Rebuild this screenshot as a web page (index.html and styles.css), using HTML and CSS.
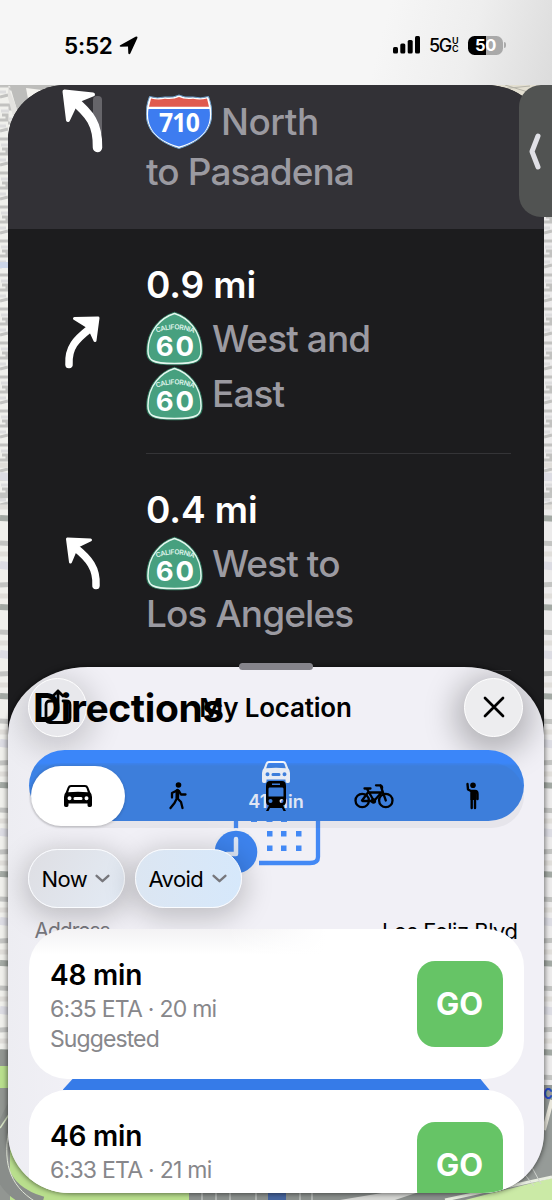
FILE: index.html
```html
<!DOCTYPE html>
<html lang="en">
<head>
<meta charset="utf-8">
<title>Directions</title>
<link rel="stylesheet" href="styles.css">
</head>
<body>
<svg class="defs" width="0" height="0" aria-hidden="true">
  <defs>
    <symbol id="ca60" viewBox="0 0 58 55">
      <path d="M29 .8C43 5 57.300 19 57.300 40C57.300 50 54 54.300 29 54.300S.7 50 .7 40C.7 19 15 5 29 .8Z" fill="#3f9f7c" stroke="#2c6b55" stroke-width="1"/>
      <path d="M29 2C42 6 56 19 56 40C56 49 53 53 29 53S2 49 2 40C2 19 16 6 29 2Z" fill="#47a07f" stroke="#e4f6ee" stroke-width="1.500"/>
      <path id="caArc" d="M11 21.800Q29 14.500 48 21.800" fill="none"/>
      <text class="shield-state"><textPath href="#caArc" textLength="38">CALIFORNIA</textPath></text>
      <text class="shield-number" x="29" y="45" text-anchor="middle" textLength="38">60</text>
    </symbol>
    <symbol id="car" viewBox="0 0 28 22">
      <path fill-rule="evenodd" d="M7 0H21Q23.500 0 24.400 2.400L26.200 7.300Q28 9 28 12V20.200Q28 22 26.200 22H25Q23.500 22 23.500 20.300V18.500H4.500V20.300Q4.500 22 3 22H1.800Q0 22 0 20.200V12Q0 9 1.800 7.300L3.600 2.400Q4.500 0 7 0ZM7.400 2Q6 2 5.500 3.300L4.200 7.200Q14 6.300 23.800 7.200L22.500 3.300Q22 2 20.600 2ZM5.500 11.300A2 2 0 1 0 5.500 15.300A2 2 0 0 0 5.500 11.300ZM22.500 11.300A2 2 0 1 0 22.500 15.300A2 2 0 0 0 22.500 11.300ZM10.800 12Q9.500 12 9.500 13.500T10.800 15H17.200Q18.500 15 18.500 13.500T17.200 12Z"/>
    </symbol>
    <linearGradient id="land" x1="0" y1="0" x2="1" y2="0"><stop offset="0" stop-color="#f0f0ec"/><stop offset="1" stop-color="#ecebeb"/></linearGradient>
    <pattern id="blocks" width="17" height="34" patternUnits="userSpaceOnUse">
      <path d="M0 3H10V7H17M2 13H7V18H0M8 21H17M0 29L8 27" stroke="#c2c2c0" stroke-width="3" fill="none"/>
      <path d="M1 9H9M9 17H17M0 24H6" stroke="#dcdcdd" stroke-width="3" fill="none"/>
    </pattern>
    <pattern id="streets" width="20" height="89" patternUnits="userSpaceOnUse">
      <path d="M0 9L20 10M0 51L20 50" stroke="#c3c4c2" stroke-width="5"/>
      <path d="M0 31L20 33" stroke="#dcdce3" stroke-width="8"/>
      <path d="M0 73L20 74" stroke="#a3a9a4" stroke-width="6"/>
      <path d="M0 20H20M0 62H20" stroke="#e0deda" stroke-width="5"/>
    </pattern>
  </defs>
</svg>

<main class="screen">
  <svg class="map" viewBox="0 0 552 1200" aria-hidden="true">
    <rect width="552" height="1200" fill="url(#land)"/>
    <rect y="85" width="552" height="420" fill="url(#blocks)"/>
    <rect y="460" width="552" height="640" fill="url(#streets)"/>
    <path d="M0 85H60V100H30L20 120L10 86Z" fill="#bdbdbb"/>
    <path d="M26 88L42 90L28 99Z" fill="#f4f3ef"/>
    <path d="M8 86L19 114L14 120L8 98Z" fill="#e3e2df"/>
    <path d="M490 85H552V105H510Z" fill="#e3dfd1"/>
    <path d="M500 89L530 86M505 85L528 92" stroke="#b5b3a8"/>
    <path d="M0 265H10" stroke="#cdd6e8" stroke-width="6"/>
    <path d="M0 1066L120 1060V1200H0Z" fill="#b9df8d"/>
    <path d="M0 1050H10V1066H0ZM0 1088H10V1200H0Z" fill="#929692"/>
    <path d="M14 1108C-12 1155 -4 1190 42 1204" fill="none" stroke="#898d8a" stroke-width="15"/>
    <path d="M10 1125C2 1160 8 1185 36 1202" fill="none" stroke="#dfe4d6" stroke-width="1"/>
    <path d="M0 1128L10 1113" stroke="#d6e3c4" stroke-width="1.500"/>
    <path d="M110 1185H192V1200H110Z" fill="#b9df8d"/>
    <path d="M189 1185H552V1200H189Z" fill="#8c918e"/>
    <path d="M202 1185V1200M216 1185V1200M230 1185V1200M256 1185V1200M300 1185V1200M312 1185V1200" stroke="#d5d8d5"/>
    <path d="M268 1190H286V1200H268Z" fill="#46659e"/>
    <path d="M544 1085H552V1180L500 1200H480Z" fill="#969b98"/>
    <path d="M340 1200L400 1190H425L395 1200Z" fill="#d6d7d4"/>
    <path d="M465 1200L552 1178V1200Z" fill="#cbeaa6"/>
    <path d="M445 1200L552 1177" stroke="#e9eee1" stroke-width="3"/>
    <path d="M528 1160L541 1184M518 1166L534 1186" stroke="#d3d6d1"/>
    <path d="M552 1100L544 1130" stroke="#e9e7dc" stroke-width="4"/>
    <text class="map-label" x="543.500" y="1099" textLength="9" lengthAdjust="spacingAndGlyphs">C</text>
  </svg>

  <header class="status">
    <span class="time">5:52</span>
    <svg class="location" viewBox="0 0 19 19"><path d="M1.200 9.200L16.500 .700Q19 -.200 18.300 2.300L11.300 17.600Q10 19 9.300 17.200L9 10.600L1.900 10.700Q-.200 10.200 1.200 9.200Z"/></svg>
    <svg class="signal" viewBox="0 0 27 18"><rect y="11" width="5" height="6.500" rx="1.500"/><rect x="7.300" y="7.500" width="5" height="10" rx="1.500"/><rect x="14.700" y="4" width="5" height="13.500" rx="1.500"/><rect x="22" y="0" width="5" height="17.500" rx="1.500"/></svg>
    <span class="network">5G</span><span class="uc"><span>U</span><span>C</span></span>
    <span class="battery">50</span><span class="nub"></span>
  </header>

  <section class="steps">
    <article class="step current">
      <svg class="maneuver" viewBox="8 85 138 144"><rect x="93" y="96" width="9" height="40" rx="4" fill="#66656a"/><path d="M97.500 147.500C98 124 90 114 72 99" fill="none" stroke="#fff" stroke-width="9.500" stroke-linecap="round"/><path d="M64.500 91.500L93 94.500L77 101L68 120Z" fill="#fff" stroke="#fff" stroke-width="4" stroke-linejoin="round"/></svg>
      <div class="copy">
        <p class="line road"><svg class="interstate" viewBox="0 0 66 56">
          <path d="M3.500 2.500Q11 5 19 3Q28 4 33 1Q38 4 47 3Q55 5 62.500 2.500C72 28 61 46 33 54.500C5 46 -6 28 3.500 2.500Z" fill="#fff" stroke="#6b9cc8"/>
          <path d="M5 4.500Q12 6.500 19 4.800Q28 5.600 33 3Q38 5.600 47 4.800Q54 6.500 61 4.500L63 12.800H3Z" fill="#e05a4f"/>
          <path d="M2.500 15H63.500C66 32 58 46 33 52.500C8 46 0 32 2.500 15Z" fill="#3d7cf0"/>
          <text class="shield-number interstate-number" x="33" y="38" text-anchor="middle" textLength="40" lengthAdjust="spacingAndGlyphs">710</text></svg><span class="w-north">North</span></p>
        <p class="line plain">to Pasadena</p>
      </div>
    </article>
    <article class="step second">
      <svg class="maneuver" viewBox="8 229 138 224"><path d="M69 364C68 347 76 339 90 328" fill="none" stroke="#fff" stroke-width="7.500" stroke-linecap="round"/><path d="M74.500 318L98 317.500L95 340L89 327Z" fill="#fff" stroke="#fff" stroke-width="3" stroke-linejoin="round"/></svg>
      <div class="copy ruled">
        <p class="line distance">0.9 mi</p>
        <p class="line road"><svg class="state"><use href="#ca60"/></svg><span>West and</span></p>
        <p class="line road"><svg class="state"><use href="#ca60"/></svg><span>East</span></p>
      </div>
    </article>
    <article class="step third">
      <svg class="maneuver" viewBox="8 454 138 216"><path d="M96 585C97 568 89 558 75 547" fill="none" stroke="#fff" stroke-width="7.500" stroke-linecap="round"/><path d="M67.500 538.500L90.500 539.500L77 546L70.500 561.500Z" fill="#fff" stroke="#fff" stroke-width="3" stroke-linejoin="round"/></svg>
      <div class="copy ruled">
        <p class="line distance">0.4 mi</p>
        <p class="line road"><svg class="state"><use href="#ca60"/></svg><span>West to</span></p>
        <p class="line plain">Los Angeles</p>
      </div>
    </article>
  </section>
  <div class="side-tab"><svg viewBox="0 0 33 132"><path d="M19 51L13 66.500L19 82" fill="none" stroke="#e0e0e6" stroke-width="5" stroke-linecap="round" stroke-linejoin="round"/></svg></div>

  <div class="sheet-wrap">
  <section class="sheet">
    <svg class="calendar" viewBox="0 0 106 66" aria-hidden="true">
      <path d="M21 0V20M103 0V44Q103 50 95 50H44" fill="none" stroke="#4389f5" stroke-width="4.300"/>
      <path d="M36 4h6v5h-6zM51.500 4h6v5h-6zM66 4h6v5h-6zM52 18h5.500v5.500h-5.500zM66 18h5.500v5.500h-5.500zM81 18h5.500v5.500h-5.500zM52 32.500h5.500v5.500h-5.500zM66 32.500h5.500v5.500h-5.500zM81 32.500h5.500v5.500h-5.500z" fill="#4389f5"/>
      <circle cx="21" cy="39" r="24" fill="#eeeef3"/><circle cx="21" cy="39" r="21.300" fill="#3d83ed"/>
      <path d="M21 26V41H12" fill="none" stroke="#dce6f6" stroke-width="4.500" stroke-linecap="round" stroke-linejoin="round"/>
    </svg>
    <header class="sheet-head">
      <button class="round share" aria-label="Share"><svg viewBox="0 0 28 36"><path d="M9 12H6Q2 12 2 16V29Q2 33.500 6 33.500H22Q26 33.500 26 29V16Q26 12 22 12H19M14 23V2M9 7L14 2L19 7" fill="none" stroke="#000" stroke-width="2.800" stroke-linecap="round" stroke-linejoin="round"/></svg></button>
      <span class="place">My Location</span>
      <button class="round close" aria-label="Close"><svg viewBox="0 0 22 22"><path d="M2 2L20 20M20 2L2 20" stroke="#000" stroke-width="2.700" stroke-linecap="round"/></svg></button>
      <h1>Directions</h1>
    </header>

    <div class="modes">
      <div class="blue"><svg class="car-white"><use href="#car"/></svg><span>41 min</span></div>
      <nav class="segments">
        <span class="segment selected"><svg width="28" height="22"><use href="#car"/></svg></span>
        <span class="segment"><svg width="19" height="28" viewBox="0 0 19 28"><circle cx="10.500" cy="3" r="2.800"/><path d="M9.500 8L9 16L13 20L14.500 26M8 18L6.500 21L2.500 26M9 8.500L4 11V15.500M11 9L13 12.500H17.500" fill="none" stroke="#000" stroke-width="2.300" stroke-linecap="round" stroke-linejoin="round"/><path d="M7.500 8Q10 6 11.500 8.500L11 17H7.500Z"/></svg></span>
        <span class="segment"><svg width="22" height="30" viewBox="0 0 22 30"><path fill-rule="evenodd" d="M5 0H17Q21 0 21 5V20Q21 24 18 24.500L21 30H18.500L17 27H5L3.500 30H1L4 24.500Q1 24 1 20V5Q1 0 5 0ZM7 2.500V4H15V2.500ZM4.500 6.500Q3.500 6.500 3.500 8V15.500H18.500V8Q18.500 6.500 17.500 6.500ZM5.500 18A2 2 0 1 0 5.500 22A2 2 0 0 0 5.500 18ZM16.500 18A2 2 0 1 0 16.500 22A2 2 0 0 0 16.500 18Z"/></svg></span>
        <span class="segment"><svg width="40" height="26" viewBox="0 0 40 26" fill="none" stroke="#000" stroke-width="2.300" stroke-linecap="round" stroke-linejoin="round"><circle cx="8.200" cy="17.500" r="6.700"/><circle cx="31.800" cy="17.500" r="6.700"/><path d="M8 17.500L14 9.500H27.500M13 6L20 18H8.500M20 18L27.500 9.500M10.500 5.500H16.500M31.800 17.500L26.500 2.300H22M26.500 2.300Q28.500 3 28 5.500"/><circle cx="19.500" cy="18" r="1.500"/></svg></span>
        <span class="segment"><svg width="13" height="28" viewBox="0 0 13 28"><circle cx="7" cy="3.300" r="2.800"/><path d="M1.500 2L2 7.500L5 9H9Q11.500 9 11.500 12V17M5.700 10V26M9 10V26" fill="none" stroke="#000" stroke-width="2.400" stroke-linecap="round" stroke-linejoin="round"/><path d="M4.500 8H10.200V18H4.500Z"/></svg></span>
      </nav>
    </div>

    <div class="chips">
      <span class="chip now"><b>Now</b><svg viewBox="0 0 14 8"><path d="M1.500 1.500L7 6.500L12.500 1.500"/></svg></span>
      <span class="chip avoid"><b>Avoid</b><svg viewBox="0 0 14 8"><path d="M1.500 1.500L7 6.500L12.500 1.500"/></svg></span>
    </div>

    <div class="address"><span class="label">Address</span><span class="street">Los Feliz Blvd</span></div>

    <article class="route">
      <div class="route-text"><h2>48 min</h2><p class="eta">6:35 ETA · 20 mi</p><p class="note">Suggested</p></div>
      <button class="go">GO</button>
    </article>
    <div class="peek"></div>
    <article class="route">
      <div class="route-text"><h2>46 min</h2><p class="eta">6:33 ETA · 21 mi</p></div>
      <button class="go">GO</button>
    </article>
  </section>
  <i class="grabber"></i>
  </div>
</main>
</body>
</html>
```
FILE: styles.css
```css
* { box-sizing: border-box; }
body, p, h1, h2 { margin: 0; }
body { font-family: Inter, "Liberation Sans", sans-serif; color: #000; }
button { border: 0; padding: 0; font: inherit; color: inherit; }
.defs { position: absolute; }

.screen { position: relative; width: 552px; height: 1200px; overflow: hidden; display: flex; flex-direction: column; isolation: isolate; }
.map { position: absolute; inset: 0; z-index: -1; }
.map-label { font-size: 15px; font-weight: 700; fill: #2749c7; }

/* Status bar */
.status { height: 85px; flex: none; display: flex; align-items: center; padding: 5px 46px 0 64px; background: linear-gradient(105deg, #f6f6f6 68%, #eee 84%, #dcdcdc 100%); }
.time { font-size: 22.500px; font-weight: 600; letter-spacing: -.2px; width: 55px; white-space: nowrap; }
.location { width: 19px; height: 19px; }
.signal { width: 27px; height: 18px; margin-left: auto; }
.network { font-size: 18px; font-weight: 500; letter-spacing: -1.400px; margin-left: 9px; width: 22px; white-space: nowrap; }
.uc { display: flex; flex-direction: column; font-size: 9px; font-weight: 600; line-height: 8.500px; width: 8px; margin-left: 1px; }
.battery { width: 35px; height: 19px; margin-left: 8px; border-radius: 6.500px; background: linear-gradient(90deg, #000 51%, #a9a9a9 51%); color: #fff; font-size: 16.500px; font-weight: 700; line-height: 19px; text-align: center; letter-spacing: -.3px; }
.nub { width: 2px; height: 6px; margin-left: 1px; border-radius: 0 2px 2px 0; background: #aaa; }

/* Turn list */
.steps { width: 536px; height: 660px; flex: none; margin: 0 8px; background: #1c1c1e; border-radius: 58px 58px 0 0 / 55px 50px 0 0; overflow: hidden; }
.step { display: flex; }
.maneuver { width: 138px; flex: none; }
.current { height: 144px; background: #323136; }
.second { height: 225px; }
.third { height: 217px; }
.current .copy { padding-top: 9px; }
.copy { width: 365px; padding-top: 28px; }
.ruled { border-bottom: 1px solid #343437; }
.line { font-size: 37px; font-weight: 450; letter-spacing: -.9px; color: #9b9aa1; white-space: nowrap; }
.w-north { letter-spacing: -.5px; }
.road { display: flex; align-items: center; height: 55px; line-height: 55px; }
.plain { height: 46px; line-height: 46px; }
.distance { color: #fff; font-weight: 600; height: 54px; line-height: 56px; letter-spacing: -.1px; }
.interstate { width: 66px; height: 56px; margin-right: 9px; }
.state { width: 57px; height: 55px; margin-right: 9px; }
.shield-number { font-size: 28px; font-weight: 700; fill: #fff; }
.interstate-number { font-family: "Noto Sans", sans-serif; font-size: 27px; }
.shield-state { font-size: 7px; font-weight: 600; fill: #dff3ea; }

.side-tab { position: absolute; top: 85px; right: 0; width: 33px; height: 132px; background: #515352; border-radius: 22px 0 0 22px; }
.side-tab svg { display: block; }

/* Route sheet */
.sheet-wrap { position: relative; flex: none; width: 536px; margin: -78px 8px 0; }
.sheet { position: relative; height: 526px; padding: 0 20.500px; background: linear-gradient(90deg, #ededf2, #f1f0f6 12%, #f1f0f6); border-radius: 80px 80px 62px 62px / 68px 68px 60px 60px; overflow: hidden; }
.sheet-wrap::before { content: ""; position: absolute; inset: 0; border-radius: 80px 80px 62px 62px / 68px 68px 60px 60px; box-shadow: 0 0 5px 1px rgba(0,0,0,.5); }
.grabber { position: absolute; top: -4px; left: 231px; width: 74px; height: 7px; border-radius: 4px; background: #85848b; }
.sheet-head { position: relative; height: 83px; display: flex; align-items: center; justify-content: space-between; padding-bottom: 3px; margin: 0 .5px 0 -.5px; }
.round { width: 59px; height: 59px; border-radius: 50%; display: grid; place-items: center; background: #ededef; border: 1.500px solid #fff; }
.share { box-shadow: 0 7px 30px 8px rgba(0,0,0,.16); background: #e8e8ec; }
.close { box-shadow: 0 7px 30px 10px rgba(0,0,0,.25); }
.share svg { width: 28px; height: 36px; }
.close svg { width: 22px; height: 22px; }
.place { font-size: 26px; font-weight: 600; white-space: nowrap; letter-spacing: -.2px; }
h1 { position: absolute; left: 5px; top: 16px; font-size: 39px; line-height: 50px; font-weight: 700; letter-spacing: -.4px; }
.calendar { position: absolute; left: 207px; top: 146px; width: 106px; height: 66px; }

.modes { position: relative; padding-top: 13px; }
.blue { position: absolute; top: 0; left: 0; right: 0; height: 71px; border-radius: 36px; background: linear-gradient(#3b86f9 0 13px, #3c82e5 16px); display: flex; flex-direction: column; align-items: center; color: #eaf2ff; font-size: 18px; font-weight: 600; line-height: 22px; padding-top: 11px; gap: 8px; }
.car-white { width: 28px; height: 22px; fill: #f3f8ff; }
.segments { position: relative; height: 65px; display: grid; grid-template-columns: repeat(5, 1fr); border-radius: 33px; background: rgba(90,90,100,.07); padding: 3px 2px 2px; }
.segment { display: grid; place-items: center; }
.selected { width: 94px; background: #fff; border-radius: 30px; box-shadow: 0 1px 3px rgba(0,0,0,.22); }

.chips { position: relative; display: flex; gap: 10.500px; margin: 21px 0 0 -.5px; }
.chip { height: 59px; display: flex; align-items: center; justify-content: space-between; padding: 0 14px 0 12.500px; border-radius: 30px; border: 1.500px solid #fafcff; box-shadow: 0 6px 28px 4px rgba(0,0,0,.21); }
.chip b { font-size: 22px; font-weight: 400; letter-spacing: -.6px; }
.chip svg { width: 15px; height: 9px; fill: none; stroke: #77777c; stroke-width: 2.200; stroke-linecap: round; stroke-linejoin: round; }
.now { width: 96.500px; background: linear-gradient(120deg, #dedee3, #e3ebf5); }
.avoid { width: 107px; background: linear-gradient(90deg, #dce6f2, #d6e8fb); }

.address { height: 26px; margin: 9px 6px -14px; display: flex; justify-content: space-between; font-size: 22px; line-height: 28px; color: #77777d; }
.label { font-size: 21px; letter-spacing: -1px; }
.street { color: #000; letter-spacing: -.5px; }
.route { position: relative; height: 150px; padding: 22px 21px 0 21.500px; display: flex; justify-content: space-between; align-items: flex-start; background: #fff; border-radius: 38px; }
.route:first-of-type { background: linear-gradient(90deg, transparent 40%, #fff 60%), linear-gradient(#f3f2f4, #fff 26px); }
.route-text { padding-top: 9px; white-space: nowrap; }
h2 { font-size: 28px; font-weight: 600; line-height: 30px; letter-spacing: -.2px; }
.route-text p { font-size: 23px; line-height: 30px; color: #87878b; letter-spacing: -.75px; }
.route-text .note { letter-spacing: -.9px; }
.route-text .eta { margin-top: 4px; }
.go { margin-top: 10px; width: 86px; height: 86px; border-radius: 18px; background: #66c466; color: #fff; font-size: 31px; font-weight: 700; line-height: 84px; }
.peek { position: relative; height: 11px; margin: 0 34px; background: #367be8; clip-path: polygon(10px 0, 418px 0, 427px 11px, 0 11px); }
```
